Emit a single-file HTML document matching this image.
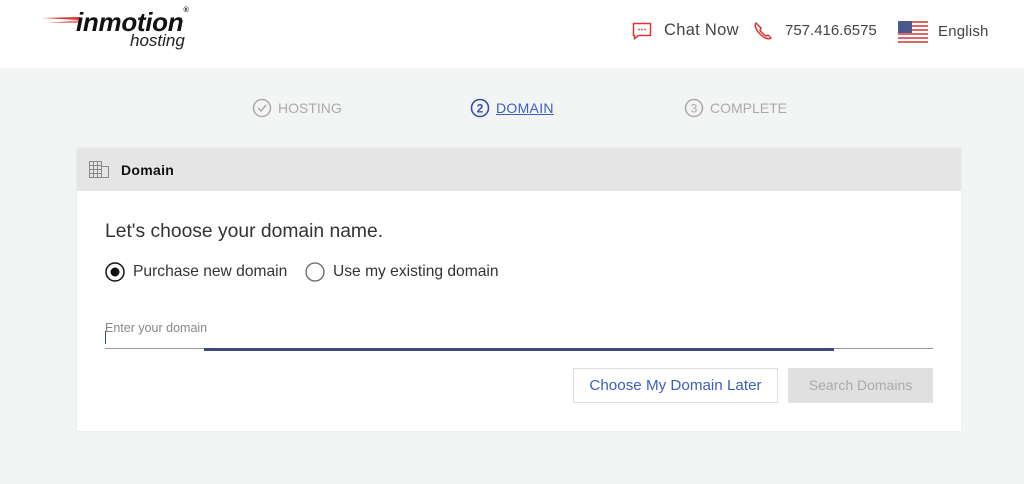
<!DOCTYPE html>
<html><head><meta charset="utf-8"><style>
*{margin:0;padding:0;box-sizing:border-box}
body{width:1024px;height:484px;overflow:hidden;font-family:"Liberation Sans",sans-serif;background:#f3f4f4;position:relative;color:#333}
.hdr{position:absolute;left:0;top:0;width:1024px;height:68px;background:#fff}
.abs{position:absolute;white-space:nowrap}
.card{position:absolute;left:77px;top:148px;width:884px;height:283px;background:#fff;box-shadow:0 0 3px rgba(0,0,0,.06)}
.ch{height:43px;background:#e5e5e5;position:relative}
</style></head><body>
<div class="hdr">
 <svg class="abs" style="left:42px;top:14px" width="40" height="14"><path d="M0 4 L38 3 L38 6 Z" fill="#d33"/><path d="M6 9 L38 6 L38 9Z" fill="#e88"/></svg>
 <div class="abs" style="left:76px;top:7px;font-size:26px;font-weight:bold;font-style:italic;color:#111;letter-spacing:-0.3px">inmotion<span style="font-size:7px;vertical-align:top">®</span></div>
 <div class="abs" style="left:130px;top:31px;font-size:17px;font-style:italic;color:#222">hosting</div>
 <svg class="abs" style="left:632px;top:22px" width="20" height="18"><path d="M1.5 1.5h17v12h-12l-4 3v-3h-1z" fill="none" stroke="#d33" stroke-width="1.5"/><circle cx="7" cy="7.5" r=".9" fill="#d33"/><circle cx="10" cy="7.5" r=".9" fill="#d33"/><circle cx="13" cy="7.5" r=".9" fill="#d33"/></svg>
 <div class="abs" style="left:664px;top:21px;font-size:16.5px;color:#444;letter-spacing:0.3px">Chat Now</div>
 <svg class="abs" style="left:753px;top:21px" width="20" height="20"><path d="M3 2c-2 2 0 7 4 11s9 6 11 4l-3-3-2 1c-2-1-5-4-6-6l1-2z" fill="none" stroke="#d33" stroke-width="1.5" stroke-linejoin="round"/></svg>
 <div class="abs" style="left:785px;top:22px;font-size:15px;color:#444">757.416.6575</div>
 <svg class="abs" style="left:898px;top:21px" width="30" height="22"><rect width="30" height="22" fill="#fff"/><g fill="#d66"><rect y="0" width="30" height="2"/><rect y="4" width="30" height="2"/><rect y="8" width="30" height="2"/><rect y="12" width="30" height="2"/><rect y="16" width="30" height="2"/><rect y="20" width="30" height="2"/></g><rect width="14" height="12" fill="#4a5a8a"/></svg>
 <div class="abs" style="left:938px;top:23px;font-size:15px;color:#444;letter-spacing:0.2px">English</div>
</div>
<svg class="abs" style="left:252px;top:98px" width="20" height="20"><circle cx="10" cy="10" r="8.5" fill="none" stroke="#aaa" stroke-width="1.5"/><path d="M6 10l3 3 5-6" fill="none" stroke="#aaa" stroke-width="1.5"/></svg>
<div class="abs" style="left:278px;top:100px;font-size:14px;color:#aaa">HOSTING</div>
<svg class="abs" style="left:470px;top:98px" width="20" height="20"><circle cx="10" cy="10" r="8.5" fill="none" stroke="#3a4fa0" stroke-width="1.6"/><text x="10" y="14.5" font-size="12" font-weight="bold" text-anchor="middle" fill="#3a4fa0" font-family="Liberation Sans">2</text></svg>
<div class="abs" style="left:496px;top:100px;font-size:14px;color:#3a5fc0;text-decoration:underline;letter-spacing:0.3px">DOMAIN</div>
<svg class="abs" style="left:684px;top:98px" width="20" height="20"><circle cx="10" cy="10" r="8.5" fill="none" stroke="#aaa" stroke-width="1.5"/><text x="10" y="14.5" font-size="12" text-anchor="middle" fill="#aaa" font-family="Liberation Sans">3</text></svg>
<div class="abs" style="left:710px;top:100px;font-size:14px;color:#aaa">COMPLETE</div>
<div class="card">
 <div class="ch">
  <svg class="abs" style="left:12px;top:13px" width="20" height="18"><g fill="none" stroke="#888" stroke-width="1"><rect x=".5" y=".5" width="12" height="16"/><rect x="12.5" y="5.5" width="7" height="11"/><path d="M.5 4.5h12M.5 8.5h12M.5 12.5h12M4.5 .5v16M8.5 .5v16"/></g></svg>
  <div class="abs" style="left:44px;top:14px;font-size:14px;font-weight:bold;color:#111;letter-spacing:0.3px">Domain</div>
 </div>
 <div class="abs" style="left:28px;top:73px;font-size:19.3px;color:#333">Let's choose your domain name.</div>
 <svg class="abs" style="left:28px;top:114px" width="20" height="20"><circle cx="10" cy="10" r="9" fill="none" stroke="#111" stroke-width="1.5"/><circle cx="10" cy="10" r="4.5" fill="#111"/></svg>
 <div class="abs" style="left:56px;top:115px;font-size:15.6px;color:#333">Purchase new domain</div>
 <svg class="abs" style="left:228px;top:114px" width="20" height="20"><circle cx="10" cy="10" r="9" fill="none" stroke="#666" stroke-width="1.3"/></svg>
 <div class="abs" style="left:256px;top:115px;font-size:15.6px;color:#333">Use my existing domain</div>
 <div class="abs" style="left:28px;top:173px;font-size:12.5px;color:#888">Enter your domain</div>
 <div class="abs" style="left:28px;top:183px;width:1px;height:13px;background:#3a4fa0"></div>
 <div class="abs" style="left:28px;top:200px;width:828px;height:1px;background:#999"></div>
 <div class="abs" style="left:127px;top:200px;width:630px;height:3px;background:#3d4a7a"></div>
 <div class="abs" style="left:496px;top:220px;width:205px;height:35px;border:1px solid #ddd;color:#3a5fc0;font-size:15.2px;text-align:center;line-height:33px">Choose My Domain Later</div>
 <div class="abs" style="left:711px;top:220px;width:145px;height:35px;background:#e0e0e0;color:#aaa;font-size:14px;text-align:center;line-height:35px">Search Domains</div>
</div>
</body></html>
